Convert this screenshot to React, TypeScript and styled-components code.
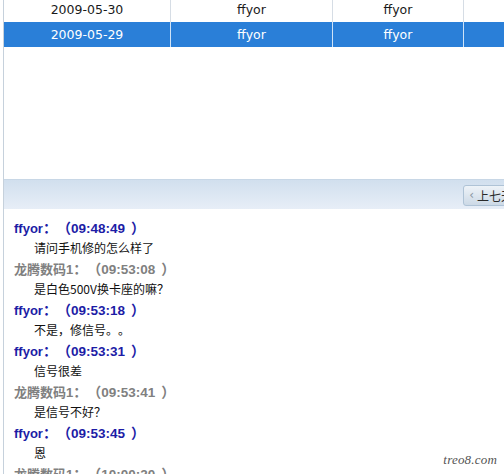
import React from 'react'
import styled, { createGlobalStyle } from 'styled-components'

const GlobalStyle = createGlobalStyle`
  html, body {
    margin: 0;
    padding: 0;
    background: #fff;
    overflow: hidden;
  }
  body {
    font-family: "DejaVu Sans", "Noto Sans CJK SC", sans-serif;
  }
`

const Page = styled.div`
  position: relative;
  width: 504px;
  height: 474px;
  overflow: hidden;
  padding-left: 3px;
  box-sizing: border-box;
`

const Frame = styled.div`
  border-left: 1px solid #c6d1dc;
  height: 100%;
  display: flex;
  flex-direction: column;
`

const GridPanel = styled.div`
  height: 179px;
  flex: none;
  overflow: hidden;
`

const Table = styled.div`
  margin-top: -3px;
  display: flex;
  flex-direction: column;
`

const Row = styled.div<{ $selected?: boolean }>`
  display: grid;
  grid-template-columns: 167px 162px 131px 1fr;
  height: 25px;
  background: ${p => (p.$selected ? '#2a7fd8' : '#fff')};
  color: ${p => (p.$selected ? '#fff' : '#1a1a1a')};
  width: 560px;
`

const Cell = styled.div<{ $selected?: boolean }>`
  display: flex;
  align-items: center;
  justify-content: center;
  font-size: 12.5px;
  border-right: 1px solid ${p => (p.$selected ? '#cfe3f7' : '#d6dde5')};
  &:last-child {
    border-right: none;
  }
`

const Toolbar = styled.div`
  height: 30px;
  flex: none;
  box-sizing: border-box;
  border-top: 1px solid #c8d7e6;
  background: linear-gradient(#d1dfee, #e7eef7);
  display: flex;
  align-items: center;
  justify-content: flex-end;
  overflow: hidden;
`

const PrevButton = styled.div`
  flex: none;
  margin-right: -16px;
  margin-top: 1px;
  height: 19px;
  padding: 0 6px 0 5px;
  display: flex;
  align-items: center;
  gap: 3px;
  border: 1px solid #afc3d6;
  border-radius: 3px;
  background: linear-gradient(#eef3f8, #ccd9e6);
  font-size: 12px;
  color: #2a2a2a;
  font-family: "Noto Sans CJK SC", sans-serif;
  white-space: nowrap;
`

const Arrow = styled.span`
  color: #8a96a2;
  font-size: 12px;
  font-family: "DejaVu Sans", sans-serif;
`

const Chat = styled.div`
  padding: 8px 0 0 10px;
  display: flex;
  flex-direction: column;
  text-spacing-trim: space-all;
`

const Speaker = styled.div<{ $self?: boolean }>`
  height: 20px;
  line-height: 20px;
  font-size: 13.5px;
  font-weight: bold;
  white-space: nowrap;
  color: ${p => (p.$self ? '#1c1ca6' : '#808080')};
  font-family: "Liberation Sans", "Noto Sans CJK SC", sans-serif;
`

const SpeakerName = styled.span`
  font-size: 13px;
`

const Punct = styled.span<{ $close?: boolean }>`
  font-family: "Noto Sans CJK SC", sans-serif;
  font-size: 14px;
  font-weight: bold;
  padding-left: ${p => (p.$close ? '6px' : '0')};
`

const Message = styled.div`
  height: 21px;
  line-height: 21px;
  padding-left: 20px;
  font-size: 12px;
  color: #111;
  font-family: "Noto Sans CJK SC", sans-serif;
  white-space: nowrap;
`

const Watermark = styled.div`
  position: absolute;
  right: 7px;
  bottom: 6px;
  font-family: "Liberation Serif", serif;
  font-style: italic;
  font-size: 13px;
  color: #555;
  letter-spacing: 0.2px;
`

const rows = [
  { date: '2009-05-30', a: 'ffyor', b: 'ffyor' },
  { date: '2009-05-29', a: 'ffyor', b: 'ffyor', selected: true },
]

const messages = [
  { name: 'ffyor', time: '09:48:49', text: '请问手机修的怎么样了', self: true },
  { name: '龙腾数码1', time: '09:53:08', text: '是白色500V换卡座的嘛？' },
  { name: 'ffyor', time: '09:53:18', text: '不是，修信号。。', self: true },
  { name: 'ffyor', time: '09:53:31', text: '信号很差', self: true },
  { name: '龙腾数码1', time: '09:53:41', text: '是信号不好？' },
  { name: 'ffyor', time: '09:53:45', text: '恩', self: true },
  { name: '龙腾数码1', time: '10:00:20', text: '' },
]

export default function App() {
  return (
    <>
      <GlobalStyle />
      <Page>
        <Frame>
          <GridPanel>
            <Table>
              {rows.map(r => (
                <Row key={r.date} $selected={r.selected}>
                  <Cell $selected={r.selected}>{r.date}</Cell>
                  <Cell $selected={r.selected}>{r.a}</Cell>
                  <Cell $selected={r.selected}>{r.b}</Cell>
                  <Cell $selected={r.selected} />
                </Row>
              ))}
            </Table>
          </GridPanel>
          <Toolbar>
            <PrevButton>
              <Arrow>‹</Arrow>
              上七天
            </PrevButton>
          </Toolbar>
          <Chat>
            {messages.map((m, i) => (
              <React.Fragment key={i}>
                <Speaker $self={m.self}>
                  <SpeakerName>{m.name}</SpeakerName>
                  <Punct>：（</Punct>
                  {m.time}
                  <Punct $close>）</Punct>
                </Speaker>
                {m.text && <Message>{m.text}</Message>}
              </React.Fragment>
            ))}
          </Chat>
        </Frame>
        <Watermark>treo8.com</Watermark>
      </Page>
    </>
  )
}
